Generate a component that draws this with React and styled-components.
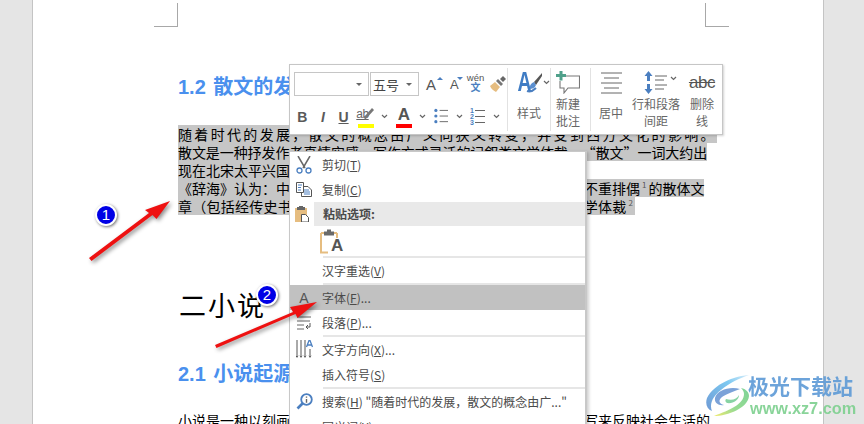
import React from "react";
import styled, { createGlobalStyle } from "styled-components";

const GlobalStyle = createGlobalStyle`
  html, body { margin: 0; padding: 0; }
  body { font-family: "Noto Sans CJK SC", "Liberation Sans", sans-serif; }
`;

const BLUE = "#4a90ee";
const ICON_BLUE = "#4b7fc0";
const TAN = "#e6bd80";

const Workspace = styled.div`
  position: relative;
  display: flex;
  width: 864px;
  height: 424px;
  padding-left: 32px;
  box-sizing: border-box;
  overflow: hidden;
  background: #e5e5e5;
`;

const Page = styled.div`
  width: 792px;
  height: 424px;
  padding-top: 3px;
  box-sizing: border-box;
  background: #fff;
  border-left: 1px solid #c4c4c4;
  border-right: 1px solid #c4c4c4;
  overflow: hidden;
`;

const CropRow = styled.div`
  display: flex;
  justify-content: space-between;
  width: 575px;
  margin-left: 121px;
`;

const CropMark = styled.div`
  width: 23px;
  height: 23px;
  border-bottom: 1px solid #a8a8a8;
  ${(p) => (p.$side === "left" ? "border-right: 1px solid #a8a8a8;" : "border-left: 1px solid #a8a8a8;")}
`;

const Content = styled.div`
  margin-left: 145px;
  white-space: nowrap;
`;

const Heading = styled.h2`
  margin: ${(p) => p.$top}px 0 0;
  height: 28px;
  font: bold 20px/28px "Liberation Sans", "Noto Sans CJK SC", sans-serif;
  word-spacing: 2px;
  color: ${BLUE};
`;

const ChapterTitle = styled.h1`
  margin: 70px 0 0 1px;
  height: 40px;
  font-size: 27px;
  font-weight: 400;
  line-height: 40px;
  letter-spacing: 2px;
  color: #000;
`;

const Paragraph = styled.div`
  margin-top: ${(p) => p.$top}px;
`;

const Line = styled.div`
  height: 18px;
  font-size: 14px;
  line-height: 18px;
  color: #000;
`;

const Selected = styled.span`
  display: inline-block;
  height: 18px;
  background: #c6c6c6;
  letter-spacing: ${(p) => p.$spacing || 0}px;
`;

// curly quotes take a full character cell, as they do in the document font
const Quote = styled.span`
  display: inline-block;
  width: 14px;
  text-align: ${(p) => (p.$open ? "right" : "left")};
`;

const Note = styled.sup`
  margin: 0 2px;
  font-size: 8px;
  line-height: 0;
  color: #555;
`;

/* mini toolbar */
const Toolbar = styled.div`
  position: absolute;
  left: 289px;
  top: 64px;
  display: flex;
  width: 434px;
  height: 71px;
  box-sizing: border-box;
  padding: 3px 0 3px 4px;
  background: #fff;
  border: 1px solid #c6c6c6;
  box-shadow: 1px 1px 2px rgba(0, 0, 0, 0.18);
`;

const FormatArea = styled.div`
  display: flex;
  flex-direction: column;
  width: 213px;
`;

const ToolRow = styled.div`
  display: flex;
  align-items: center;
  height: ${(p) => p.$height}px;
  padding-top: ${(p) => p.$pad || 0}px;
`;

const Combo = styled.div`
  display: flex;
  align-items: center;
  justify-content: space-between;
  width: ${(p) => p.$width}px;
  height: 24px;
  margin-right: 1px;
  padding: 0 6px 0 2px;
  box-sizing: border-box;
  border: 1px solid #c6c6c6;
  font-size: 13px;
  color: #444;
`;

const DownTriangle = styled.span`
  width: 0;
  height: 0;
  border-left: 3px solid transparent;
  border-right: 3px solid transparent;
  border-top: 3px solid #666;
`;

const FontSizeButton = styled.div`
  display: flex;
  align-items: flex-start;
  width: ${(p) => p.$width}px;
  height: 22px;
  padding-left: ${(p) => p.$pad}px;
  box-sizing: border-box;
  font: ${(p) => p.$size}px/24px "Liberation Sans", sans-serif;
  color: #555;
`;

const Caret = styled.span`
  width: 0;
  height: 0;
  margin: 4px 0 0 ${(p) => (p.$up ? 1 : -2)}px;
  border-left: 3px solid transparent;
  border-right: 3px solid transparent;
  ${(p) => (p.$up ? `border-bottom: 3px solid ${ICON_BLUE};` : `border-top: 3px solid ${ICON_BLUE};`)}
`;

const PhoneticButton = styled.div`
  display: flex;
  flex-direction: column;
  align-items: center;
  width: 19px;
  height: 24px;
  margin-right: 4px;
  font: 9.5px/11px "Liberation Sans", "Noto Sans CJK SC", sans-serif;
  color: #555;
  span { color: ${ICON_BLUE}; font-size: 10px; line-height: 10px; font-weight: 700; }
`;

const StyleLetter = styled.span`
  width: ${(p) => p.$width}px;
  text-align: center;
  font-family: "Liberation Sans", sans-serif;
  font-size: 14px;
  font-weight: 700;
  font-style: ${(p) => (p.$italic ? "italic" : "normal")};
  text-decoration: ${(p) => (p.$under ? "underline" : "none")};
  color: #5a5a5a;
`;

const ColorButton = styled.div`
  display: flex;
  flex-direction: column;
  align-items: center;
  width: 16px;
  height: 24px;
  margin-left: ${(p) => p.$left || 0}px;
  font: ${(p) => (p.$bold ? 700 : 400)} ${(p) => p.$size}px/19px "Liberation Sans", sans-serif;
  color: #555;
`;

const HighlightMark = styled.div`
  display: flex;
  align-items: center;
  height: 19px;
  font: 12px/14px "Liberation Sans", sans-serif;
  letter-spacing: -0.5px;
  text-decoration: underline;
  color: #666;
  svg { margin-left: -5px; }
`;

const ColorBar = styled.span`
  flex: none;
  width: 16px;
  height: 4px;
  background: ${(p) => p.$color};
`;

const Chevron = styled.svg`
  flex: none;
  width: 7px;
  height: 5px;
  margin: ${(p) => p.$margin || "0 7.5px"};
`;

const Divider = styled.div`
  flex: none;
  width: 1px;
  background: #e2e2e2;
`;

const BigButton = styled.div`
  display: flex;
  flex-direction: column;
  align-items: center;
  flex: none;
  box-sizing: border-box;
  width: ${(p) => p.$width}px;
  padding-right: ${(p) => p.$right || 0}px;
`;

const BigIcon = styled.div`
  display: flex;
  align-items: center;
  justify-content: center;
  height: 25px;
  padding-top: 2px;
  padding-left: ${(p) => p.$indent || 0}px;
`;

const BigLabel = styled.div`
  display: flex;
  align-items: center;
  height: 34px;
  font-size: 12px;
  line-height: 17px;
  text-align: center;
  color: #666;
  white-space: pre-line;
`;

const StyleA = styled.span`
  display: inline-block;
  margin-left: -6px;
  font: 700 27px/25px "Liberation Sans", sans-serif;
  color: #3f7cc4;
  transform: scaleX(0.72);
  transform-origin: right center;
`;

const StyleBrushSvg = styled.svg`
  margin-left: -6px;
`;

const Strike = styled.span`
  font: 17px/20px "Liberation Sans", sans-serif;
  letter-spacing: -0.4px;
  color: #555;
  text-decoration: line-through;
`;

/* context menu */
const Menu = styled.div`
  position: absolute;
  left: 289px;
  top: 151px;
  width: 298px;
  height: 300px;
  box-sizing: border-box;
  background: #fff;
  border: 1px solid #c8c8c8;
  border-right-width: 2px;
  box-shadow: 2px 1px 3px rgba(0, 0, 0, 0.18);
  font-size: 12px;
  color: #4a4a4a;
`;

const MenuRow = styled.div`
  display: flex;
  align-items: center;
  height: ${(p) => p.$height || 25}px;
  background: ${(p) => (p.$active ? "#c1c1c1" : "transparent")};
`;

const MenuIcon = styled.div`
  display: flex;
  align-items: center;
  justify-content: center;
  flex: none;
  width: 32px;
  padding-right: 4px;
  box-sizing: border-box;
`;

const MenuLetter = styled.span`
  font: 14px "Liberation Sans", sans-serif;
  color: #555;
`;

const PasteIconCell = styled.div`
  display: flex;
  align-items: center;
  justify-content: center;
  flex: none;
  width: 24px;
`;

const PasteBand = styled.div`
  flex: 1;
  height: 24px;
  padding-left: 9px;
  font-weight: 700;
  line-height: 24px;
  background: #e9e9e9;
`;

const PasteOptions = styled.div`
  display: flex;
  align-items: center;
  height: 30px;
  padding-left: 30px;
`;

const KeepTextA = styled.span`
  margin: 9px 0 0 -8px;
  font: 700 17px/15px "Liberation Sans", sans-serif;
  color: #555;
`;

const Separator = styled.div`
  height: 2px;
  margin-left: 33px;
  background: #e6e6e6;
`;

const SubmenuArrow = styled.span`
  margin-left: auto;
  margin-right: 10px;
  width: 0;
  height: 0;
  border-top: 3px solid transparent;
  border-bottom: 3px solid transparent;
  border-left: 4px solid #444;
`;

/* annotations painted on top of the screenshot */
const Annotation = styled.svg`
  position: absolute;
  left: 0;
  top: 0;
  filter: drop-shadow(2px 2px 2px rgba(0, 0, 0, 0.45));
  pointer-events: none;
`;

const Badge = styled.div`
  position: absolute;
  left: ${(p) => p.$x - 11}px;
  top: ${(p) => p.$y - 11}px;
  width: 22px;
  height: 22px;
  box-sizing: border-box;
  border: 2px solid #fff;
  border-radius: 50%;
  background: #0000e6;
  box-shadow: 1px 1px 3px rgba(0, 0, 0, 0.55);
  font: 400 15px/18px "Liberation Sans", sans-serif;
  text-align: center;
  color: #fff;
`;

const Watermark = styled.div`
  position: absolute;
  left: 705px;
  top: 374px;
  display: flex;
  opacity: 0.9;
`;

const BrandText = styled.div`
  margin-left: -3px;
`;

const BrandName = styled.div`
  font: 700 21px/22px "Noto Sans CJK SC", sans-serif;
  color: #5d9ad6;
`;

const BrandUrl = styled.div`
  margin: 5px 0 0 2px;
  font: 700 16.3px/14px "Liberation Sans", sans-serif;
  color: #7dd08f;
`;

const NumberedLines = styled.div`
  display: grid;
  grid-template-columns: 5px 10px;
  grid-auto-rows: 6px;
  align-items: center;
  width: 15px;
  font: 700 7px/6px "Liberation Sans", sans-serif;
  color: ${ICON_BLUE};
  i { display: block; height: 1px; background: #666; }
`;

const Mn = styled.span`
  text-decoration: underline;
`;

const Down = () => (
  <Chevron viewBox="0 0 7 5">
    <path d="M1 1l2.5 2.5L6 1" fill="none" stroke="#666" strokeWidth="1.2" />
  </Chevron>
);

const Brush = () => (
  <svg width="18" height="18" viewBox="0 0 18 18">
    <path d="M1 11l5-4 5 5-4 5c-2-1-5-3-6-6z" fill={TAN} />
    <path d="M7 6l2-2 5 5-2 2z" fill="#777" />
    <path d="M11 4l3-3 3 3-3 3z" fill="#666" />
  </svg>
);

const Bullets = () => (
  <svg width="15" height="17" viewBox="0 0 15 17">
    {[2, 8, 14].map((y) => (
      <g key={y}>
        <circle cx="2" cy={y} r="1.7" fill={ICON_BLUE} />
        <path d={`M6 ${y}h9`} stroke="#666" />
      </g>
    ))}
  </svg>
);

const NumberList = () => (
  <NumberedLines>
    <span>1</span><i />
    <span>2</span><i />
    <span>3</span><i />
  </NumberedLines>
);

const Pen = () => (
  <svg width="12" height="14" viewBox="0 0 12 14">
    <path d="M1 13l9-10-2-2-8 9z" fill="#777" />
  </svg>
);

const StyleBrush = () => (
  <StyleBrushSvg width="17" height="24" viewBox="0 0 17 24">
    <path d="M16 2L8 11l2 3 6-9z" fill="#555" />
    <path d="M8 11c-3 1-4 3-5 7 3 0 6-1 7-4z" fill="#5b8fd0" />
    <path d="M1 20c3 1 6 0 9-3" stroke="#4b7fc0" strokeWidth="2" fill="none" />
  </StyleBrushSvg>
);

const Comment = () => (
  <svg width="24" height="23" viewBox="0 0 24 23">
    <path d="M5 5h18.5v12H12l-4 5v-5H4v-7" fill="none" stroke="#777" strokeWidth="1.1" />
    <path d="M3.5 0h3v3H10v3H6.5v3.5h-3V6H0V3h3.5z" fill="#4fa08a" />
  </svg>
);

const CenterLines = () => (
  <svg width="21" height="22" viewBox="0 0 21 22">
    <path d="M0 1h21M3 6h15M0 11h21M3 16h15M0 21h21" stroke="#666" />
  </svg>
);

const Spacing = () => (
  <svg width="23" height="23" viewBox="0 0 23 23">
    <path d="M4.5 0l4 5H6v5H3V5H.5zM4.5 23l4-5H6v-5H3v5H.5z" fill="#4b7fc0" />
    <path d="M11 5h12M11 9h9M11 14h12M11 18h9" stroke="#666" />
  </svg>
);

const ScissorsIcon = () => (
  <svg width="16" height="18" viewBox="0 0 16 18">
    <path d="M2 0l7 12M14 0L7 12" stroke="#666" strokeWidth="1.5" fill="none" />
    <circle cx="3.5" cy="14.5" r="2.5" fill="none" stroke={ICON_BLUE} strokeWidth="1.3" />
    <circle cx="12.5" cy="14.5" r="2.5" fill="none" stroke={ICON_BLUE} strokeWidth="1.3" />
  </svg>
);

const CopyIcon = () => (
  <svg width="16" height="15" viewBox="0 0 16 15">
    <path d="M.5.5h7v10h-7zM7 4.5h5l3.5 3.5v6.5h-10v-4" fill="#fff" stroke="#555" />
    <path d="M2 3h4M2 5.5h3M2 8h3M8 8h5M8 10h6M8 12h6" stroke={ICON_BLUE} />
  </svg>
);

const PasteIcon = () => (
  <svg width="14" height="16" viewBox="0 0 14 16">
    <path d="M0 2h12v14H0z" fill={TAN} />
    <path d="M4 0h4v1h2v3H2V1h2z" fill="#666" />
    <path d="M6.5 8.5h4l3 3v4.5h-7z" fill="#fff" stroke="#555" />
  </svg>
);

const KeepTextIcon = () => (
  <svg width="19" height="25" viewBox="0 0 19 25">
    <path d="M1 4h3M14 4h3M1 4v19.5h7M17 4v5" fill="none" stroke={TAN} strokeWidth="2" />
    <path d="M7 .5h4v2h3v4H4v-4h3z" fill="#6a6a6a" />
  </svg>
);

const ParagraphIcon = () => (
  <svg width="14" height="14" viewBox="0 0 14 14">
    <path d="M0 1h14M0 5h13M0 9h7M0 13h7" stroke="#666" />
    <path d="M13 7v4H9m2-2l-2 2 2 2" fill="none" stroke="#555" />
  </svg>
);

const DirectionIcon = () => (
  <svg width="17" height="19" viewBox="0 0 17 19">
    <path d="M1 0v15M5 0v15M9 0v15M14 9v6" stroke="#555" />
    {[1, 5, 9, 14].map((x) => (
      <path key={x} d={`M${x - 1.5} 15.5h3L${x} 18z`} fill="#555" />
    ))}
    <path d="M10.5 7L13 .5h1L16.5 7M11.5 5h4" fill="none" stroke={ICON_BLUE} strokeWidth="1.3" />
  </svg>
);

const SearchIcon = () => (
  <svg width="17" height="17" viewBox="0 0 17 17">
    <circle cx="10.5" cy="6.5" r="5.3" fill="none" stroke={ICON_BLUE} strokeWidth="1.8" />
    <path d="M6.5 10.5L1.5 15.5" stroke={ICON_BLUE} strokeWidth="2.6" />
    <path d="M10.5 3.4v1.4M10.5 6v3.8" stroke="#666" strokeWidth="1.4" />
  </svg>
);

const XzLogo = () => (
  <svg width="46" height="43" viewBox="0 0 46 43">
    <defs>
      <linearGradient id="sky" x1="1" y1="0" x2="0" y2="1">
        <stop offset="0" stopColor="#d5ecfa" />
        <stop offset="0.35" stopColor="#6fc3f0" />
        <stop offset="1" stopColor="#5f8fd0" />
      </linearGradient>
      <linearGradient id="leaf" x1="1" y1="0" x2="0" y2="1">
        <stop offset="0" stopColor="#6fcf8e" />
        <stop offset="0.6" stopColor="#8fd886" />
        <stop offset="1" stopColor="#f0e860" />
      </linearGradient>
    </defs>
    <path d="M44 1C29 2 9 10 2 24c-2 6 0 11 5 13-3-7 1-15 9-21C24 9 35 4 44 1z" fill="url(#sky)" />
    <path d="M35 15c-10-3-23 1-25 9-1 5 4 8 9 7-5-1-6-5-2-8 4-3 11-5 18-8z" fill="#6d98d4" />
    <path d="M39 20c0 10-14 16-30 22 14 0 34-8 35-20 0-4-3-7-8-8 2 2 3 4 3 6z" fill="url(#leaf)" />
    <path d="M21 25c6 2 11 0 13-4 0 5-6 9-12 8-2-1-2-3-1-4z" fill="#7bcf9a" />
  </svg>
);

const menuItems = [
  { key: "cut", icon: <ScissorsIcon />, text: <>剪切(<Mn>T</Mn>)</> },
  { key: "copy", icon: <CopyIcon />, text: <>复制(<Mn>C</Mn>)</> },
];

const App = () => (
  <Workspace lang="zh-CN">
    <GlobalStyle />
    <Page>
      <CropRow>
        <CropMark $side="left" />
        <CropMark $side="right" />
      </CropRow>
      <Content>
        <Heading $top={46}>1.2 散文的发展</Heading>
        <Paragraph $top={24}>
          <Line><Selected $spacing={2.33}>随着时代的发展，散文的概念由广义向狭义转变，并受到西方文化的影响。</Selected></Line>
          <Line><Selected $spacing={-0.08}>散文是一种抒发作者真情实感、写作方式灵活的记叙类文学体裁，<Quote $open>“</Quote>散文<Quote>”</Quote>一词大约出</Selected></Line>
          <Line><Selected>现在北宋太平兴国年间。</Selected></Line>
          <Line><Selected>《辞海》认为：中国古代文学中，为区别韵文、骈文，把凡不押韵不重排偶<Note>1</Note>的散体文</Selected></Line>
          <Line><Selected $spacing={0.25}>章（包括经传史书），统称<Quote $open>“</Quote>散文<Quote>”</Quote>。后又泛指诗歌以外的所有文学体裁<Note>2</Note></Selected></Line>
        </Paragraph>
        <ChapterTitle>二小说</ChapterTitle>
        <Heading $top={35}>2.1 小说起源</Heading>
        <Paragraph $top={23}>
          <Line>小说是一种以刻画人物形象为中心，通过完整的故事情节和环境描写来反映社会生活的</Line>
        </Paragraph>
      </Content>
    </Page>

    <Toolbar>
      <FormatArea>
        <ToolRow $height={28} $pad={4}>
          <Combo $width={75}><span /><DownTriangle /></Combo>
          <Combo $width={49}>五号<DownTriangle /></Combo>
          <FontSizeButton $width={27} $pad={6} $size={15}>A<Caret $up /></FontSizeButton>
          <FontSizeButton $width={19} $pad={3} $size={13}>A<Caret /></FontSizeButton>
          <PhoneticButton>wén<span>文</span></PhoneticButton>
          <Brush />
        </ToolRow>
        <ToolRow $height={34} $pad={6}>
          <StyleLetter $width={18}>B</StyleLetter>
          <StyleLetter $width={26} $italic>I</StyleLetter>
          <StyleLetter $width={18} $under>U</StyleLetter>
          <ColorButton $size={12} $left={6}>
            <HighlightMark>ab<Pen /></HighlightMark>
            <ColorBar $color="#ffff00" />
          </ColorButton>
          <Down />
          <ColorButton $size={17} $bold>
            A
            <ColorBar $color="#ff0000" />
          </ColorButton>
          <Down />
          <Bullets />
          <Down />
          <NumberList />
          <Down />
        </ToolRow>
      </FormatArea>
      <Divider />
      <BigButton $width={42}>
        <BigIcon $indent={10}>
          <StyleA>A</StyleA>
          <StyleBrush />
          <Chevron viewBox="0 0 7 5" $margin="0">
            <path d="M1 1l2.5 2.5L6 1" fill="none" stroke="#666" strokeWidth="1.2" />
          </Chevron>
        </BigIcon>
        <BigLabel>样式</BigLabel>
      </BigButton>
      <Divider />
      <BigButton $width={39} $right={5}>
        <BigIcon><Comment /></BigIcon>
        <BigLabel>{"新建\n批注"}</BigLabel>
      </BigButton>
      <Divider />
      <BigButton $width={40}>
        <BigIcon><CenterLines /></BigIcon>
        <BigLabel>居中</BigLabel>
      </BigButton>
      <BigButton $width={50}>
        <BigIcon $indent={8}>
          <Spacing />
          <Chevron viewBox="0 0 7 5" $margin="0 0 8px 3px">
            <path d="M1 1l2.5 2.5L6 1" fill="none" stroke="#666" strokeWidth="1.2" />
          </Chevron>
        </BigIcon>
        <BigLabel>{"行和段落\n间距"}</BigLabel>
      </BigButton>
      <BigButton $width={42}>
        <BigIcon><Strike>abc</Strike></BigIcon>
        <BigLabel>{"删除\n线"}</BigLabel>
      </BigButton>
    </Toolbar>

    <Menu>
      {menuItems.map((item) => (
        <MenuRow key={item.key}>
          <MenuIcon>{item.icon}</MenuIcon>
          {item.text}
        </MenuRow>
      ))}
      <MenuRow $height={24}>
        <PasteIconCell><PasteIcon /></PasteIconCell>
        <PasteBand>粘贴选项:</PasteBand>
      </MenuRow>
      <PasteOptions>
        <KeepTextIcon />
        <KeepTextA>A</KeepTextA>
      </PasteOptions>
      <Separator />
      <MenuRow>
        <MenuIcon />
        汉字重选(<Mn>V</Mn>)
      </MenuRow>
      <Separator />
      <MenuRow $active>
        <MenuIcon><MenuLetter>A</MenuLetter></MenuIcon>
        字体(<Mn>F</Mn>)...
      </MenuRow>
      <MenuRow>
        <MenuIcon><ParagraphIcon /></MenuIcon>
        段落(<Mn>P</Mn>)...
      </MenuRow>
      <Separator />
      <MenuRow>
        <MenuIcon><DirectionIcon /></MenuIcon>
        文字方向(<Mn>X</Mn>)...
      </MenuRow>
      <MenuRow>
        <MenuIcon />
        插入符号(<Mn>S</Mn>)
      </MenuRow>
      <Separator />
      <MenuRow>
        <MenuIcon><SearchIcon /></MenuIcon>
        搜索(<Mn>H</Mn>) "随着时代的发展，散文的概念由广..."
      </MenuRow>
      <MenuRow>
        <MenuIcon />
        同义词(<Mn>Y</Mn>)
        <SubmenuArrow />
      </MenuRow>
    </Menu>

    <Annotation width="864" height="424" viewBox="0 0 864 424">
      <path d="M170 201L145 210l4 3-60 45 2.5 3 61-46 4 4z" fill="#ee1111" />
      <path d="M317 302l-27 5 3 5-78 33 1.5 3 79-34 2 4z" fill="#ee1111" />
    </Annotation>
    <Badge $x={106} $y={215}>1</Badge>
    <Badge $x={267} $y={295}>2</Badge>

    <Watermark>
      <XzLogo />
      <BrandText>
        <BrandName>极光下载站</BrandName>
        <BrandUrl>www.xz7.com</BrandUrl>
      </BrandText>
    </Watermark>
  </Workspace>
);

export default App;
